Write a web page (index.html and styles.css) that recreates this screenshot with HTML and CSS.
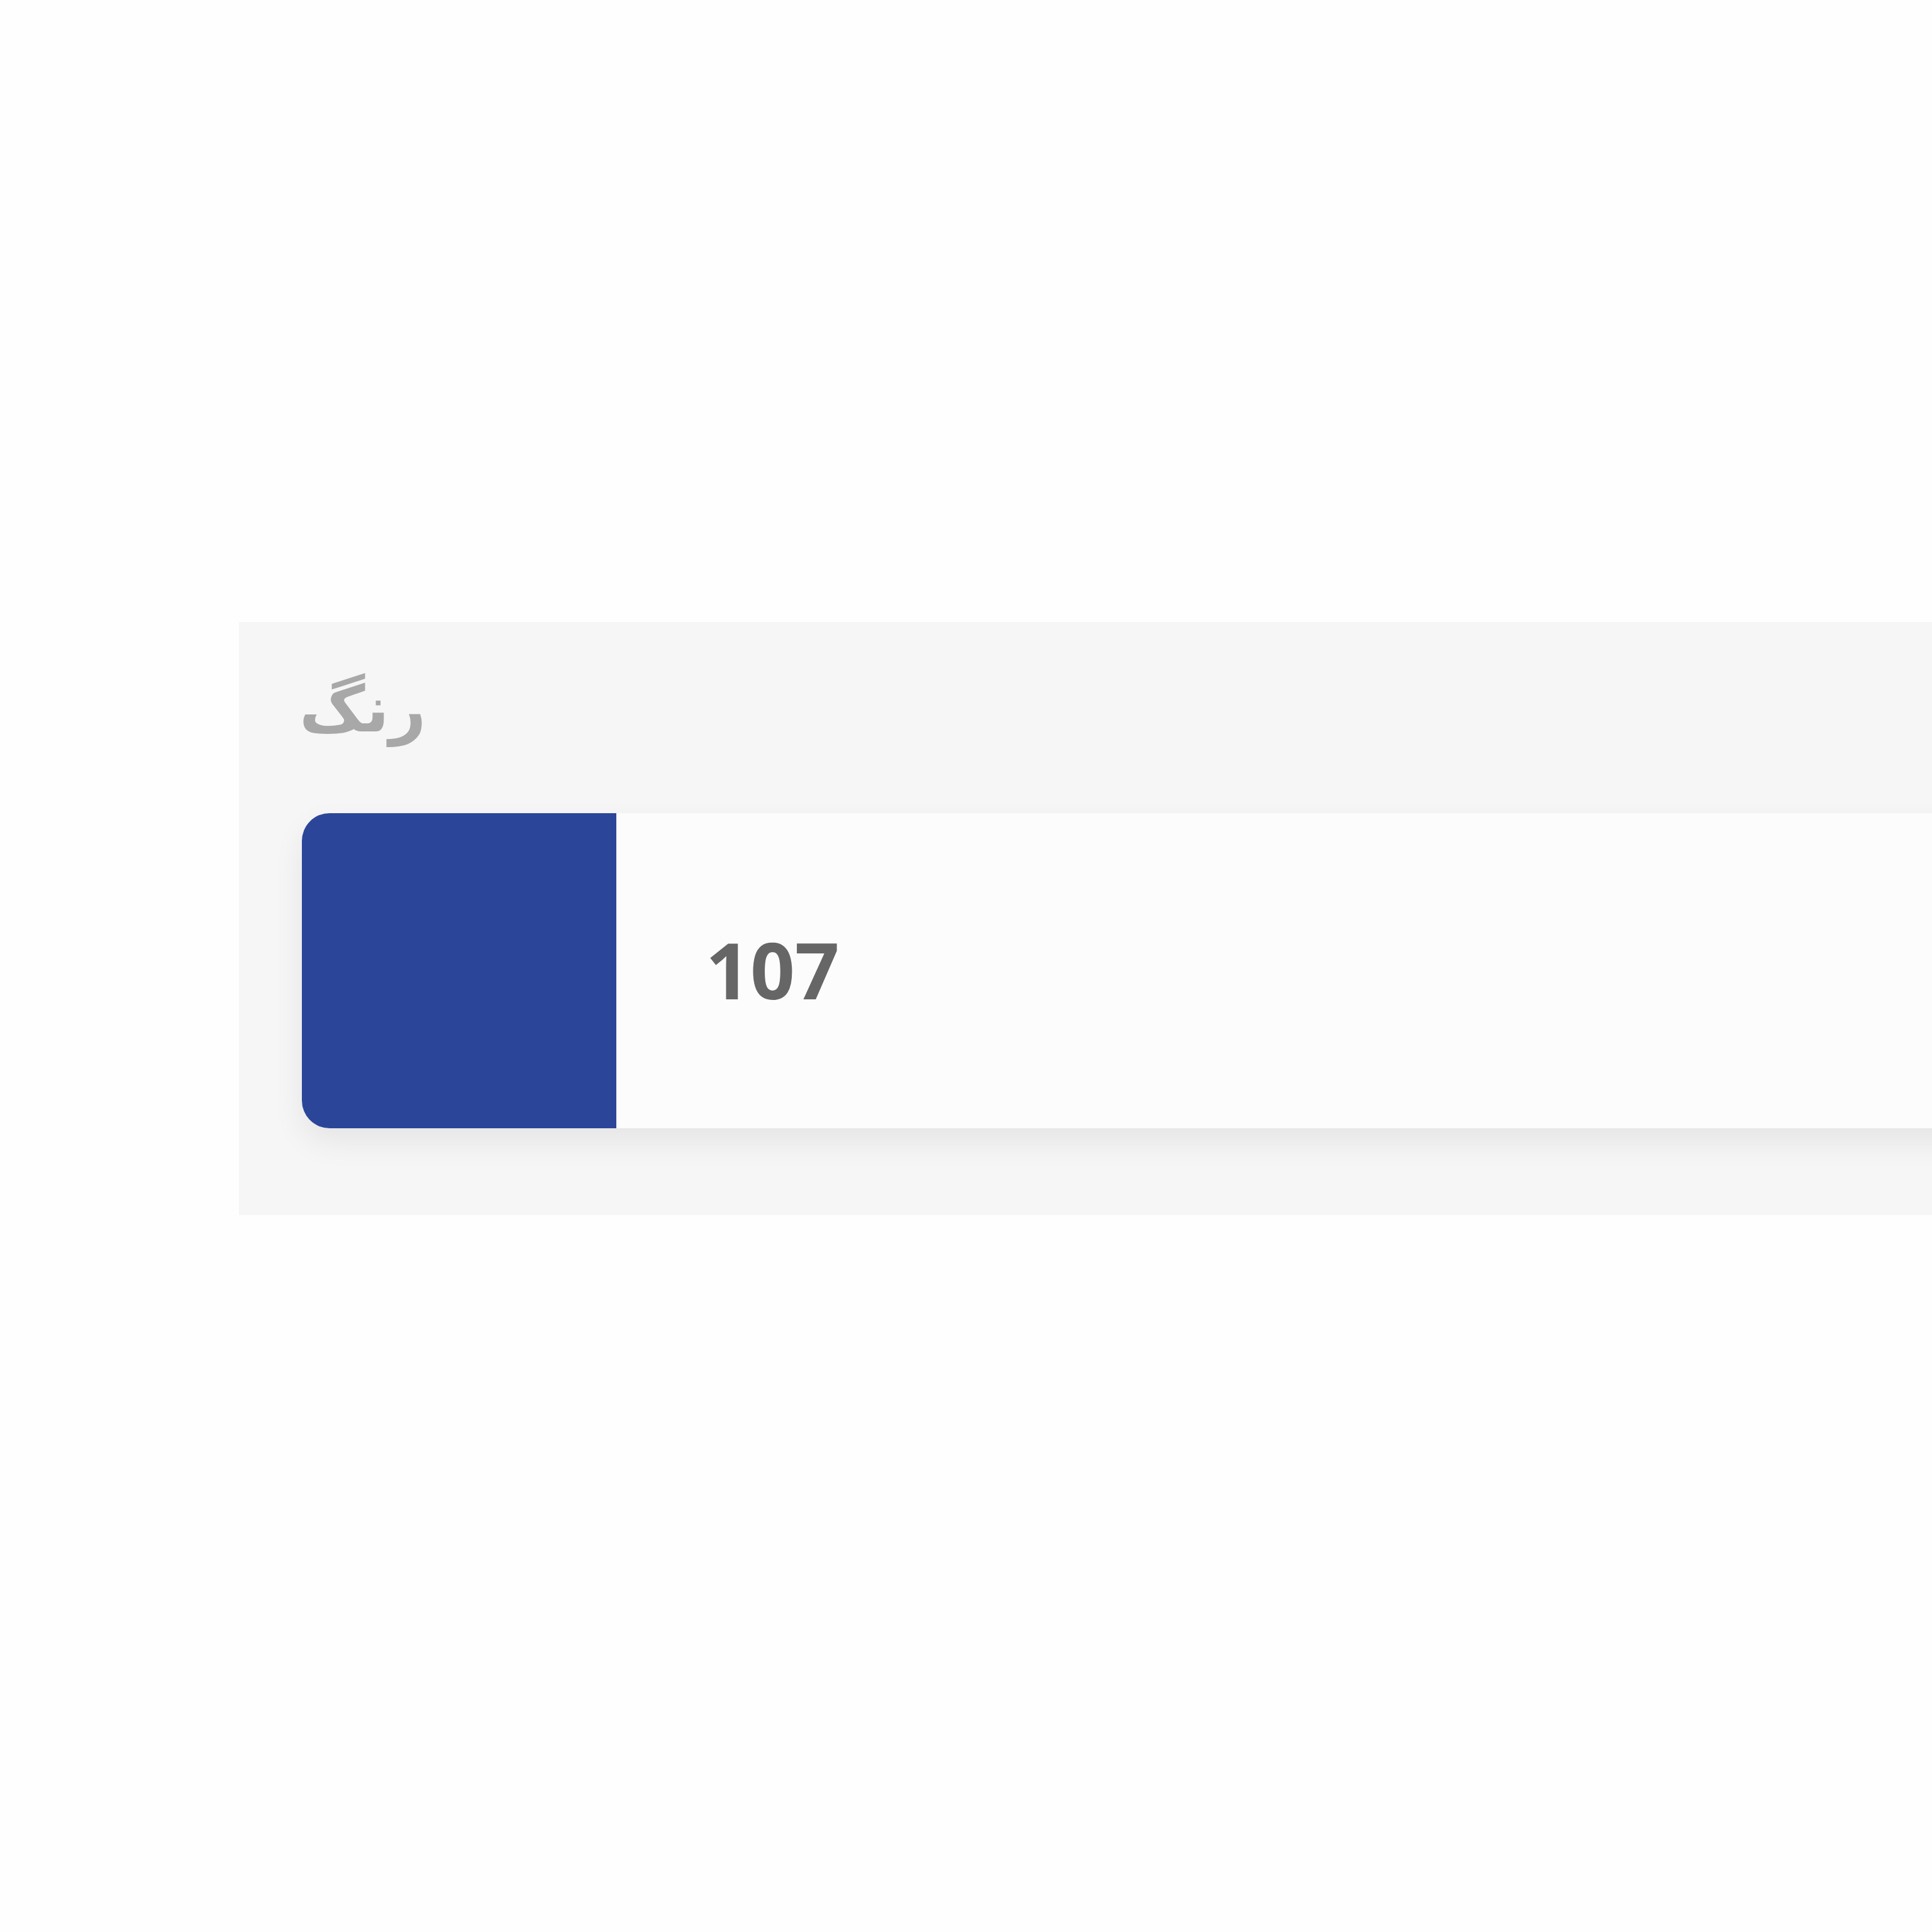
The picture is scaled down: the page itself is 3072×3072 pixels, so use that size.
FILE: index.html
```html
<!DOCTYPE html>
<html lang="fa">
<head>
<meta charset="utf-8">
<link rel="stylesheet" href="styles.css">
</head>
<body>
<div class="page">
  <section class="panel">
    <div class="label" dir="rtl">رنگ</div>
    <div class="card">
      <div class="swatch" style="background:#2b4699"></div>
      <div class="value">107</div>
    </div>
  </section>
</div>
</body>
</html>
```
FILE: styles.css
```css
html, body {
  margin: 0;
  padding: 0;
  background: #fefefe;
  overflow: hidden;
}
.page {
  width: 3072px;
  height: 3072px;
  padding-top: 989px;
  padding-left: 380px;
  box-sizing: border-box;
}
.panel {
  width: 3000px;
  background: #f6f6f6;
  padding: 64px 0 138px 96px;
  box-sizing: border-box;
}
.label {
  font-family: "DejaVu Sans", sans-serif;
  font-weight: 700;
  font-size: 102px;
  line-height: 150px;
  color: #a8a8a8;
  width: max-content;
  margin-bottom: 90px;
}
.card {
  display: flex;
  align-items: center;
  height: 501px;
  margin-left: 4px;
  background: #fcfcfc;
  border-radius: 44px 0 0 44px;
  box-shadow: 0 22px 50px rgba(0,0,0,0.07);
}
.swatch {
  width: 500px;
  height: 501px;
  border-radius: 44px 0 0 44px;
  flex: none;
}
.value {
  font-family: "Open Sans", sans-serif;
  font-weight: 700;
  font-size: 124px;
  color: #666666;
  padding-left: 142px;
  line-height: 1;
  margin-top: -6px;
}
```
